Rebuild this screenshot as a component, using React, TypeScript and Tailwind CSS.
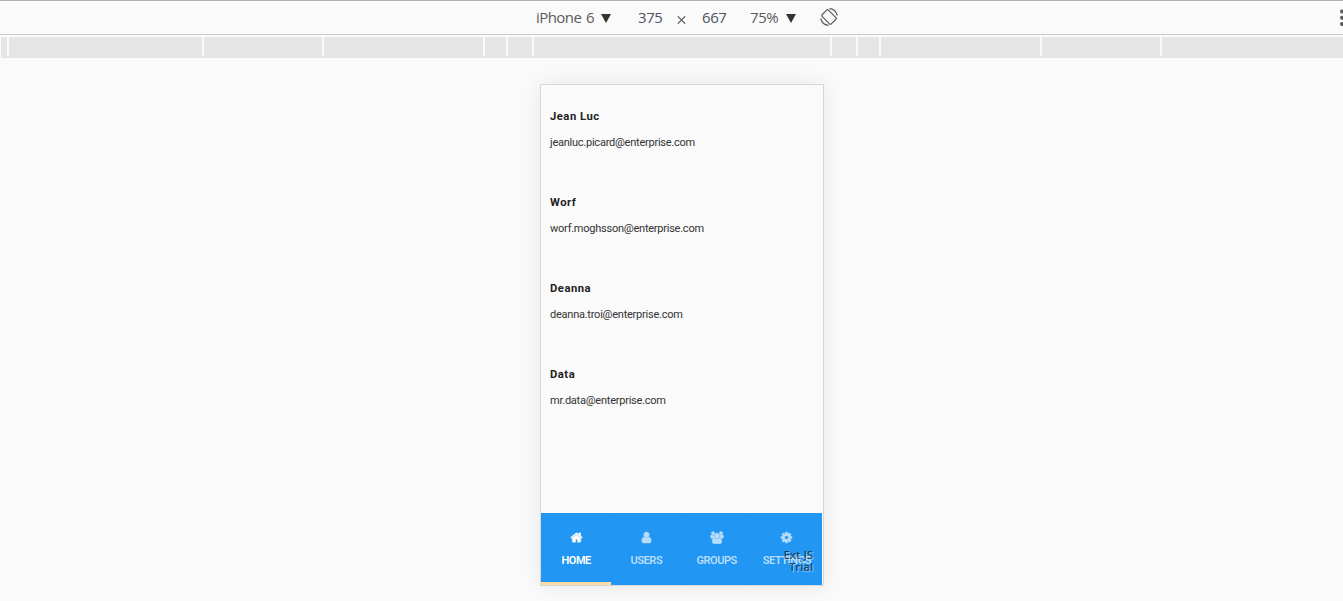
import React from "react";

const HOME =
  "M1472 992v480q0 26-19 45t-45 19h-384v-384h-256v384h-384q-26 0-45-19t-19-45v-480q0-1 .5-3t.5-3l575-474 575 474q1 2 1 6zm223-69l-62 74q-8 9-21 11h-3q-13 0-21-7l-692-577-692 577q-12 8-24 7-13-2-21-11l-62-74q-8-10-7-23.5t11-21.5l719-599q32-26 76-26t76 26l244 204v-195q0-14 9-23t23-9h192q14 0 23 9t9 23v408l219 182q10 8 11 21.5t-7 23.5z";
const USER =
  "M1536 1399q0 109-62.5 187t-150.5 78h-854q-88 0-150.5-78t-62.5-187q0-85 8.5-160.5t31.5-152 58.5-131 94-89 134.5-34.5q131 128 313 128t313-128q76 0 134.5 34.5t94 89 58.5 131 31.5 152 8.5 160.5zm-256-887q0 159-112.5 271.5t-271.5 112.5-271.5-112.5-112.5-271.5 112.5-271.5 271.5-112.5 271.5 112.5 112.5 271.5z";
const GROUP =
  "M657 896q-162 5-265 128h-134q-82 0-138-40.5t-56-118.5q0-353 124-353 6 0 43.5 21t97.5 42.5 119 21.5q67 0 133-23-5 37-5 66 0 159 93 287zm1071 637q0 120-73 189.5t-194 69.5h-874q-121 0-194-69.5t-73-189.5q0-53 3.5-103.5t14-109 26.5-108.5 43-97.5 62-81 85.5-53.5 111.5-20q10 0 43 21.5t73 48 107 48 135 21.5 135-21.5 107-48 73-48 43-21.5q61 0 111.5 20t85.5 53.5 62 81 43 97.5 26.5 108.5 14 109 3.5 103.5zm-1024-1277q0 106-75 181t-181 75-181-75-75-181 75-181 181-75 181 75 75 181zm704 384q0 159-112.5 271.5t-271.5 112.5-271.5-112.5-112.5-271.5 112.5-271.5 271.5-112.5 271.5 112.5 112.5 271.5zm576 225q0 78-56 118.5t-138 40.5h-134q-103-123-265-128 93-128 93-287 0-29-5-66 66 23 133 23 59 0 119-21.5t97.5-42.5 43.5-21q124 0 124 353zm-128-609q0 106-75 181t-181 75-181-75-75-181 75-181 181-75 181 75 75 181z";
const COG =
  "M1152 896q0-106-75-181t-181-75-181 75-75 181 75 181 181 75 181-75 75-181zm512-109v222q0 12-8 23t-20 13l-185 28q-19 54-39 91 35 50 107 138 10 12 10 25t-9 23q-27 37-99 108t-94 71q-12 0-26-9l-138-108q-44 23-91 38-16 136-29 186-7 28-36 28h-222q-14 0-24.5-8.5t-11.5-21.5l-28-184q-49-16-90-37l-141 107q-10 9-25 9-14 0-25-11-126-114-165-168-7-10-7-23 0-12 8-23 15-21 51-66.5t54-70.5q-27-50-41-99l-183-27q-13-2-21-12.5t-8-23.5v-222q0-12 8-23t19-13l186-28q14-46 39-92-40-57-107-138-10-12-10-24 0-10 9-23 26-36 98.5-107.5t94.5-71.5q13 0 26 10l138 107q44-23 91-38 16-136 29-186 7-28 36-28h222q14 0 24.5 8.5t11.5 21.5l28 184q49 16 90 37l142-107q9-9 24-9 13 0 25 10 129 119 165 170 7 8 7 22 0 12-8 23-15 21-51 66.5t-54 70.5q26 50 41 98l183 28q13 2 21 12.5t8 23.5z";

const contacts = [
  { name: "Jean Luc", email: "jeanluc.picard@enterprise.com" },
  { name: "Worf", email: "worf.moghsson@enterprise.com" },
  { name: "Deanna", email: "deanna.troi@enterprise.com" },
  { name: "Data", email: "mr.data@enterprise.com" },
];

const tabs = [
  { label: "HOME", path: HOME, box: "0 0 1792 1792", size: "w-[13px]" },
  { label: "USERS", path: USER, box: "0 0 1792 1792", size: "w-[13px]" },
  { label: "GROUPS", path: GROUP, box: "0 0 2048 1792", size: "w-[14px]" },
  { label: "SETTINGS", path: COG, box: "0 0 1792 1792", size: "w-[13px]" },
];

const segments = [
  "w-[6px]", "w-[193px]", "w-[118px]", "w-[159px]", "w-[21px]", "w-[24px]",
  "w-[296px]", "w-[24px]", "w-[21px]", "w-[159px]", "w-[118px]",
];

function Arrow() {
  return (
    <svg className="mt-px h-[9px] w-[10px] fill-[#333]" viewBox="0 0 10 9">
      <path d="M0 0h10L5 9z" />
    </svg>
  );
}

function Toolbar() {
  return (
    <header className="flex h-[35px] items-center overflow-hidden border-t border-b border-t-[#b1b1b1] border-b-[#cbcbcb] pl-[536px] text-[15px] tracking-[-0.4px] text-[#5a5a5a]">
      <span className="w-[65px] whitespace-nowrap tracking-[-0.55px] [word-spacing:1.2px]">iPhone 6</span>
      <Arrow />
      <span className="ml-[27px] w-[39px] text-[#4c5563]">375</span>
      <svg className="mt-[5px] h-2 w-[9px]" viewBox="0 0 9 8">
        <path d="M.8.3l7.400 7.400M8.200.3L.8 7.700" stroke="#666" strokeWidth="1.3" />
      </svg>
      <span className="ml-4 w-12 text-[#4c5563]">667</span>
      <span className="w-9">75%</span>
      <Arrow />
      <svg className="mb-[2px] ml-[24px] h-[18px] w-[18px]" viewBox="0 0 18 18" fill="none" stroke="#5a5a5a" strokeWidth="1.2">
        <rect x="4.5" y="2.5" width="9" height="13" rx="1.2" transform="rotate(-45 9 9)" />
        <path d="M9.500.7Q15.500 1 17.300 7.500M8.500 17.300Q2.500 17 .7 10.500" />
      </svg>
      <svg className="ml-auto h-[18px] w-[3px] fill-[#5a5a5a]" viewBox="0 0 3 18">
        <circle cx="2" cy="2.500" r="2" />
        <circle cx="2" cy="8.800" r="2" />
        <circle cx="2" cy="15" r="2" />
      </svg>
    </header>
  );
}

function Ruler() {
  return (
    <div className="mt-[2px] ml-px flex h-[21px] flex-col bg-[#e5e5e5]">
      <div className="flex h-[19px]">
        {segments.map((w, i) => (
          <div key={i} className={`box-content shrink-0 border-r-2 border-[#fafafa] ${w}`} />
        ))}
      </div>
    </div>
  );
}

function TabBar() {
  return (
    <nav className="relative mr-px flex h-[72px] bg-[#2196f3]">
      {tabs.map((t, i) => (
        <div
          key={t.label}
          className={`flex flex-1 flex-col items-center pt-[18px] ${
            i === 0 ? "border-b-[3px] border-[#ffdca0] text-white" : "text-[#b8ddfb]"
          } ${i < 3 ? "shadow-[inset_-1px_0_0_#2094f0]" : ""}`}
        >
          <svg className={`h-[13px] fill-current stroke-current ${t.size}`} strokeWidth="60" viewBox={t.box}>
            <path d={t.path} />
          </svg>
          <span className="mt-[9px] text-[11px] leading-[16px] font-semibold tracking-[-0.45px]">{t.label}</span>
        </div>
      ))}
      <div className="absolute top-[36px] right-[9px] text-right font-['Open_Sans','Noto_Sans',sans-serif] text-[11.5px] leading-[12px] font-semibold tracking-[-0.1px] text-black/60 [text-shadow:1px_1px_1px_rgba(255,255,255,0.5)]">
        Ext JS
        <br />
        Trial
      </div>
    </nav>
  );
}

export default function App() {
  return (
    <div className="h-[601px] overflow-hidden bg-[#fafafa] font-['Open_Sans','Noto_Sans',sans-serif]">
      <Toolbar />
      <Ruler />
      <main className="mt-[26px] ml-[540px] flex h-[502px] w-[284px] flex-col border border-[#d8d8d8] bg-[#fafafa] font-[Roboto,sans-serif] shadow-[0_0_20px_rgba(0,0,0,0.08)]">
        <ul className="flex-1">
          {contacts.map((c) => (
            <li key={c.name} className="h-[86px] pt-[23px] pl-[9px] text-[#222]">
              <h2 className="text-[11.25px] leading-[18px] font-bold tracking-[0.5px]">{c.name}</h2>
              <p className="mt-[8px] text-[11px] leading-[18px] tracking-[-0.24px] text-[#333]">{c.email}</p>
            </li>
          ))}
        </ul>
        <TabBar />
      </main>
    </div>
  );
}
